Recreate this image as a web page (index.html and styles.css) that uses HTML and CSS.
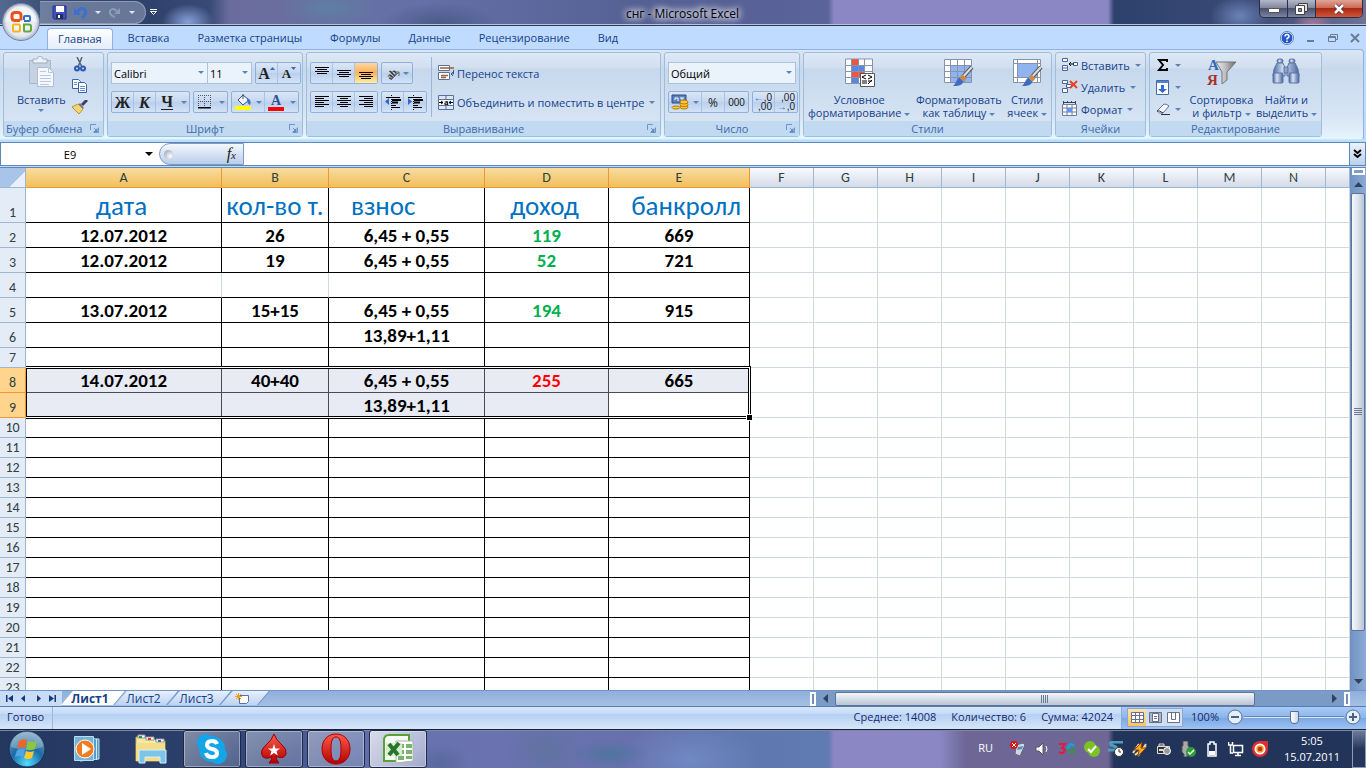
FILE: index.html
```html
<!DOCTYPE html>
<html lang="ru">
<head>
    <meta charset="UTF-8">
    <meta name="viewport" content="width=device-width, initial-scale=1.0">
    <title>снг - Microsoft Excel</title>
    <link rel="stylesheet" href="styles.css">
</head>
<body>
    <svg class="defs" aria-hidden="true">
        <defs>
            <linearGradient id="metal" x1="0" x2="1"><stop offset="0" stop-color="#eee"/><stop offset=".5" stop-color="#bbb"/><stop offset="1" stop-color="#666"/></linearGradient>
            <linearGradient id="steel" x1="0" x2="1"><stop offset="0" stop-color="#4a679f"/><stop offset=".4" stop-color="#d5e2f7"/><stop offset="1" stop-color="#48659c"/></linearGradient>
            <linearGradient id="red" x1="0" y1="0" x2="0" y2="1"><stop offset="0" stop-color="#ff5a4a"/><stop offset="1" stop-color="#b40000"/></linearGradient>
            <radialGradient id="orb" cx=".5" cy=".9" r=".9"><stop offset="0" stop-color="#4fe0ff"/><stop offset=".5" stop-color="#1d6aa5"/><stop offset="1" stop-color="#7fa3bd"/></radialGradient>
            <radialGradient id="pearl" cx=".5" cy=".5" r=".55"><stop offset="0" stop-color="#fff"/><stop offset=".7" stop-color="#e2e8f2"/><stop offset="1" stop-color="#8f9db8"/></radialGradient>
        </defs>
        <symbol id="launcher" viewBox="0 0 9 9"><path d="M.5 6V.5H6M3.500 8.500h5v-5M4 4l3 3" fill="none" stroke="#6f95c6"/><path d="M7.500 4v4h-4z" fill="#5f87bd"/></symbol>
        <symbol id="brush" viewBox="0 0 20 20"><path d="M18 1 9 11" stroke="#555" stroke-width="4"/><path d="M18 1 9 11" stroke="#ddd" stroke-width="2"/><path d="m9 8 4 4-3 3-4-4z" fill="#c98a4a"/><path d="m6 11 4 4c-2 4-6 4-10 4 3-2 3-6 6-8z" fill="#3f6cc0"/></symbol>
    </svg>

    <header class="titlebar">
        <button class="office" aria-label="Office">
            <svg width="40" height="40" viewBox="0 0 40 40"><circle cx="20" cy="20" r="18.500" fill="url(#pearl)" stroke="#77839f"/><path d="M4 20a16 16 0 0 1 32 0q-16-4-32 0z" fill="#fff" opacity=".5"/><g fill="none"><path d="M19 18.500h-5q-3 0-3-3v-2q0-3 3-3h3q3 0 3 3v5" stroke="#e8541c" stroke-width="3"/><path d="M23 18v-3q0-1 1-1h4q1 0 1 1v3q0 1-1 1h-5" stroke="#2f74c8" stroke-width="2"/><path d="M19 22.500h-6q-1 0-1 1v5q0 1 1 1h5q1 0 1-1v-6" stroke="#f5b61c" stroke-width="2"/><path d="M23 28.500v-6h5q2 0 2 2v3q0 2-2 2h-3q-2 0-2-1z" stroke="#62a737" stroke-width="2"/></g></svg>
        </button>
        <div class="quick">
            <button aria-label="Сохранить"><svg width="15" height="15" viewBox="0 0 15 15"><path d="M1 1h13v13H2l-1-1z" fill="#4050c0" stroke="#26318c"/><path d="M4 1h8v6H4z" fill="#fff"/><path d="M4 9h7v5H4z" fill="#252c60"/><path d="M6 10h2v3H6z" fill="#fff"/></svg></button>
            <button aria-label="Отменить"><svg width="14" height="14" viewBox="0 0 14 14"><path d="M3 6Q8 0 11 4q2 4-3 8" fill="none" stroke="#3c6fd0" stroke-width="3"/><path d="M0 2v7h7z" fill="#3c6fd0"/></svg></button>
            <i class="arrow pale"></i>
            <button aria-label="Вернуть"><svg width="14" height="14" viewBox="0 0 14 14"><path d="M9 5Q4 1 2 5q-1 4 5 6" fill="none" stroke="#8b9cba" stroke-width="2"/><path d="M12 2v6H6z" fill="#8b9cba"/></svg></button>
            <i class="arrow pale"></i>
        </div>
        <button class="customize" aria-label="Настройка панели"><svg width="7" height="7"><path d="M0 .5h7" stroke="#fff"/><path d="M.5 2.500h6l-3 3z" fill="none" stroke="#fff"/></svg></button>
        <h1>снг - Microsoft Excel</h1>
        <div class="window-buttons">
            <button aria-label="Свернуть"><svg width="12" height="10"><path d="M.5 4.500h11v4H.5z" fill="#fff" stroke="#555"/></svg></button>
            <button aria-label="Развернуть"><svg width="13" height="12"><path d="M3.500.5h9v8h-9z" fill="#ddd" stroke="#444"/><path d="M.5 2.500h9v9h-9z" fill="#fff" stroke="#444"/><path d="M3.500 5.500h3v3h-3z" fill="#8a8fa2" stroke="#444"/></svg></button>
            <button class="close" aria-label="Закрыть"><svg width="14" height="12"><path d="m3 2 8 8M11 2l-8 8" stroke="#5b2b2b" stroke-width="4"/><path d="m3 2 8 8M11 2l-8 8" stroke="#fff" stroke-width="2.500"/></svg></button>
        </div>
    </header>

    <nav class="tabs">
        <a href="#" class="active">Главная</a>
        <a href="#">Вставка</a>
        <a href="#">Разметка страницы</a>
        <a href="#">Формулы</a>
        <a href="#">Данные</a>
        <a href="#">Рецензирование</a>
        <a href="#">Вид</a>
        <div class="book-buttons">
            <button aria-label="Справка"><svg width="14" height="14"><circle cx="7" cy="7" r="6" fill="#2458c8" stroke="#fff"/><circle cx="7" cy="7" r="6.500" fill="none" stroke="#5b82c4"/><path d="M5 5.500Q5 3.500 7 3.500t2 2Q9 6.500 7 7.500v1M7 9.500v1.500" fill="none" stroke="#fff" stroke-width="1.500"/></svg></button>
            <button aria-label="Свернуть книгу"><svg width="10" height="10"><path d="M1 7h7v2H1z" fill="#6b7b92"/></svg></button>
            <button aria-label="Восстановить книгу"><svg width="10" height="10"><path d="M2.500 4V1.500h7v5H8" fill="none" stroke="#6b7b92"/><path d="M.5 3.500h7v5h-7zM0 4.500h8" fill="none" stroke="#6b7b92"/></svg></button>
            <button aria-label="Закрыть книгу"><svg width="10" height="10"><path d="m1 1 8 8M9 1 1 9" stroke="#6b7b92" stroke-width="2"/></svg></button>
        </div>
    </nav>

    <section class="ribbon">
        <div class="group clipboard">
            <div class="body">
                <button class="big">
                    <svg width="28" height="32" viewBox="0 0 28 32"><path d="M2.500 4.500h21v23h-21z" fill="#c6d1e1" stroke="#a9b7cc"/><path d="M6 3h4q1-3 3-3t3 3h4v4H6z" fill="#edf1f7" stroke="#9fadc2"/><path d="M10.500 11.500h11l5 5v14h-16z" fill="#f4f7fc" stroke="#afbdd4"/><path d="M21.500 11.500v5h5M13 15.500h6M13 19.500h11M13 22.500h11M13 25.500h11M13 28.500h9" fill="none" stroke="#b9c8de"/></svg>
                    <span>Вставить</span>
                    <i class="arrow"></i>
                </button>
                <div class="stack">
                    <button aria-label="Вырезать"><svg width="14" height="15" viewBox="0 0 14 15"><path d="M4 0 9 10M9 0 5 10" stroke="#52627f" stroke-width="1.500"/><g fill="none" stroke="#2d59b4" stroke-width="2"><circle cx="4" cy="11.500" r="2"/><circle cx="10" cy="11.500" r="2"/></g></svg></button>
                    <button aria-label="Копировать"><svg width="16" height="14" viewBox="0 0 16 14"><g fill="#fff" stroke="#3862ac"><path d="M.5.5h6l2 2v7h-8z"/><path d="M6.500 3.500h6l2 2v8h-8z"/></g><path d="M2 3.500h3M2 5.500h3M8 7.500h5M8 9.500h5M8 11.500h5" stroke="#5f8fd6"/></svg></button>
                    <button aria-label="Формат по образцу"><svg width="16" height="14" viewBox="0 0 16 14"><path d="m15 0-5 5" stroke="#3d3d6c" stroke-width="3"/><path d="m8 3 4 5-2 1-4-4z" fill="#6b7390"/><path d="m6 4 5 5-4 5L0 7z" fill="#f3d775" stroke="#b99232"/></svg></button>
                </div>
            </div>
            <footer>Буфер обмена<svg width="9" height="9"><use href="#launcher"/></svg></footer>
        </div>

        <div class="group font">
            <div class="body rows">
                <div class="line">
                    <label class="combo family"><select aria-label="Шрифт"><option>Calibri</option></select></label><label class="combo size"><select aria-label="Размер"><option>11</option></select></label>
                    <div class="set letters">
                        <button aria-label="Увеличить размер"><b class="serif">A</b><svg width="5" height="12"><path d="M0 3h5L2.500 0z" fill="#3b69b5"/></svg></button>
                        <button aria-label="Уменьшить размер"><b class="serif small">A</b><svg width="5" height="12"><path d="M0 0h5L2.500 3z" fill="#3b69b5"/></svg></button>
                    </div>
                </div>
                <div class="line">
                    <div class="set">
                        <button class="serif"><b>Ж</b></button>
                        <button class="serif"><b><em>К</em></b></button>
                        <button class="serif under"><b>Ч</b></button>
                        <button class="drop" aria-label="Подчёркивание"><i class="arrow"></i></button>
                    </div>
                    <div class="set">
                        <button aria-label="Границы"><svg width="14" height="14"><path d="M.5 0v12M12.500 0v12M6.500 0v12M0 .5h13M0 6.500h13" fill="none" stroke="#556" stroke-dasharray="1 1"/><path d="M0 12h13v1.500H0z"/></svg></button>
                        <button class="drop" aria-label="Вид границ"><i class="arrow"></i></button>
                    </div>
                    <div class="set">
                        <button aria-label="Заливка"><svg width="16" height="16"><path d="m3 6 5-5 6 5-6 5z" fill="#eef4ff" stroke="#3d526f"/><path d="M8 5V0" stroke="#3d526f"/><path d="M12 4q5 2 3 7-3-1-3-7z" fill="#3d6fc4"/><path d="M0 12h16v4H0z" fill="#ff0"/></svg></button>
                        <button class="drop" aria-label="Цвет заливки"><i class="arrow"></i></button>
                        <button class="color" aria-label="Цвет текста"><b>A</b></button>
                        <button class="drop" aria-label="Выбор цвета"><i class="arrow"></i></button>
                    </div>
                </div>
            </div>
            <footer>Шрифт<svg width="9" height="9"><use href="#launcher"/></svg></footer>
        </div>

        <div class="group align">
            <div class="body">
                <div class="rows">
                    <div class="line">
                        <div class="set">
                            <button aria-label="По верхнему краю"><svg width="14" height="14"><path d="M0 1.500h14M2 3.500h10M0 5.500h14M2 7.500h10" stroke="#000"/></svg></button>
                            <button aria-label="По середине"><svg width="14" height="14"><path d="M0 4.500h14M2 6.500h10M0 8.500h14M2 10.500h10" stroke="#000"/></svg></button>
                            <button class="on" aria-label="По нижнему краю"><svg width="14" height="14"><path d="M0 6.500h14M2 8.500h10M0 10.500h14M2 12.500h10" stroke="#000"/></svg></button>
                        </div>
                        <div class="set">
                            <button class="rotate" aria-label="Ориентация"><svg width="16" height="15"><text x="1" y="12" transform="rotate(-45 6 8)">ab</text><path d="m6 14 8-8M10 6h4v4" fill="none" stroke="#666"/></svg><i class="arrow"></i></button>
                        </div>
                    </div>
                    <div class="line">
                        <div class="set">
                            <button aria-label="По левому краю"><svg width="14" height="14"><path d="M0 1.500h14M0 3.500h9M0 5.500h14M0 7.500h9M0 9.500h14M0 11.500h9" stroke="#000"/></svg></button>
                            <button aria-label="По центру"><svg width="14" height="14"><path d="M0 1.500h14M3 3.500h8M0 5.500h14M3 7.500h8M0 9.500h14M3 11.500h8" stroke="#000"/></svg></button>
                            <button aria-label="По правому краю"><svg width="14" height="14"><path d="M0 1.500h14M5 3.500h9M0 5.500h14M5 7.500h9M0 9.500h14M5 11.500h9" stroke="#000"/></svg></button>
                        </div>
                        <div class="set">
                            <button aria-label="Уменьшить отступ"><svg width="16" height="15"><path d="M1 2.500h14M7 12.500h8M7 10.500h4" stroke="#000"/><path d="M7 5h9M7 7.500h6" stroke="#000" stroke-width="2"/><path d="M6.500 0v15" stroke="#000" stroke-dasharray="1 1"/><path d="M0 6.500 4 3v7z" fill="#2f69d0"/></svg></button>
                            <button aria-label="Увеличить отступ"><svg width="16" height="15"><path d="M1 2.500h14M7 12.500h8M7 10.500h4" stroke="#000"/><path d="M7 5h9M7 7.500h6" stroke="#000" stroke-width="2"/><path d="M6.500 0v15" stroke="#000" stroke-dasharray="1 1"/><path d="M5 6.500 1 3v7z" fill="#2f69d0"/></svg></button>
                        </div>
                    </div>
                </div>
                <div class="rows wrap">
                    <button class="text"><svg width="16" height="16"><path d="M.5.500h11v5H.5zM.5 7.500h11v7H.5z" fill="#fff" stroke="#56719d"/><path d="M2 3h14M3 10.500h7M3 12.500h5" stroke="#a55e2d" stroke-width="1.500"/><path d="M15.500 5v4H13m2-2-2 2 2 2" fill="none" stroke="#3d5a8e"/></svg>Перенос текста</button>
                    <button class="text"><svg width="16" height="15"><path d="M.5.5h15v14H.5zM8 0v4M8 11v4" fill="#dce8f8" stroke="#56719d"/><path d="M.5 4.500h15v6H.5z" fill="#fff" stroke="#56719d"/><path d="M1 7.500h4M11 7.500h4M3 6l2 1.500L3 9M13 6l-2 1.500L13 9" fill="none" stroke="#000"/><text x="6" y="10">a</text></svg>Объединить и поместить в центре<i class="arrow"></i></button>
                </div>
            </div>
            <footer>Выравнивание<svg width="9" height="9"><use href="#launcher"/></svg></footer>
        </div>

        <div class="group number">
            <div class="body rows">
                <div class="line"><label class="combo format"><select aria-label="Числовой формат"><option>Общий</option></select></label></div>
                <div class="line">
                    <div class="set">
                        <button aria-label="Денежный формат"><svg width="18" height="16"><path d="M1 1h14v8H1z" fill="#5c83bd" stroke="#274b8b"/><path d="M4 6V4h3v3M9 4h4M11 4v3" fill="none" stroke="#fff"/><g fill="#ffc832" stroke="#b5790c"><ellipse cx="13" cy="13" rx="4" ry="2"/><ellipse cx="13" cy="10.500" rx="4" ry="2"/><ellipse cx="13" cy="8" rx="4" ry="2"/><ellipse cx="5" cy="13.500" rx="4" ry="1.500"/></g></svg></button>
                        <button class="drop" aria-label="Валюта"><i class="arrow"></i></button>
                        <button class="dark">%</button>
                        <button class="dark zeros">000</button>
                    </div>
                    <div class="set">
                        <button class="digits"><span><i>←</i>,0</span><span>,00</span></button>
                        <button class="digits"><span>,00</span><span><i>→</i>,0</span></button>
                    </div>
                </div>
            </div>
            <footer>Число<svg width="9" height="9"><use href="#launcher"/></svg></footer>
        </div>

        <div class="group styles">
            <div class="body">
                <button class="big">
                    <svg width="31" height="32" viewBox="0 0 31 32"><path d="M1 3h27v25H1z" fill="#fff"/><path d="M8 3h6v6H8zM8 15h12v6H8z" fill="#f0553c"/><path d="M8 9h12v6H8zM8 21h6v7H8z" fill="#5b86e0"/><path d="M1.500 3v24.500h27V3zM1 9.500h27M1 15.500h27M1 21.500h27M7.500 3v25M14.500 3v25M20.500 3v25" fill="none" stroke="#8792ad"/><path d="M16.500 17.500h14v13h-14z" fill="#fff" stroke="#555"/><path d="m22 19-4 2 4 2M18 25h5M18 27h5M24 19l4 2-4 2M24 25h4M24 28l4-4" fill="none" stroke="#000"/></svg>
                    <span>Условное<br>форматирование <i class="arrow"></i></span>
                </button>
                <button class="big">
                    <svg width="31" height="32" viewBox="0 0 31 32"><path d="M1 3h27v24H1z" fill="#fff"/><path d="M8 9h20v18H8z" fill="#8fb4f0"/><path d="M1.500 3.500v23h27v-23zM1 9.500h27M1 15.500h27M1 21.500h27M7.500 3v24M14.500 3v24M21.500 3v24" fill="none" stroke="#8792ad"/><svg x="10" y="10" width="21" height="21"><use href="#brush"/></svg></svg>
                    <span>Форматировать<br>как таблицу <i class="arrow"></i></span>
                </button>
                <button class="big">
                    <svg width="31" height="32" viewBox="0 0 31 32"><path d="M1 3h28v24H1z" fill="#fff"/><path d="M6 8h19v13H6z" fill="#8fb4f0"/><path d="M1.500 3.500v23h27v-23zM1 7.500h27M1 21.500h27M5.500 3v24M25.500 3v24" fill="none" stroke="#8792ad"/><svg x="10" y="10" width="21" height="21"><use href="#brush"/></svg></svg>
                    <span>Стили<br>ячеек <i class="arrow"></i></span>
                </button>
            </div>
            <footer>Стили</footer>
        </div>

        <div class="group cells">
            <div class="body list">
                <button class="text"><svg width="16" height="14"><path d="M.5.500h5v3h-5zM.5 7.500h5v5h-5zM1 10h4M11.500 4.500h4v3h-4z" fill="#fff" stroke="#4c6592"/><path d="M7 6h5M9 4 7 6l2 2" fill="none" stroke="#000"/></svg>Вставить<i class="arrow"></i></button>
                <button class="text"><svg width="16" height="14"><path d="M.5.500h5v3h-5zM.5 8.500h5v4h-5zM4.500 4.500h5v3h-5z" fill="#fff" stroke="#4c6592"/><path d="m8 1 7 7M15 1 8 8" stroke="#ef4023" stroke-width="2"/></svg>Удалить<i class="arrow"></i></button>
                <button class="text"><svg width="16" height="16"><path d="M.5 3.500h14v11H.5zM1 7h14M1 11h14M5 4v11M10 4v11" fill="#fff" stroke="#6c7d9d"/><path d="M5 7h5v4H5z" fill="#6296ee"/><path d="M1 1.500h13M1.500 0v3M5.500 0v2M9.500 0v2M13.500 0v3" stroke="#345"/></svg>Формат<i class="arrow"></i></button>
            </div>
            <footer>Ячейки</footer>
        </div>

        <div class="group editing">
            <div class="body">
                <div class="list">
                    <button class="text" aria-label="Сумма"><svg width="14" height="14"><path d="M11 4V2H3l4 5-4 5h8v-2" fill="none" stroke="#000" stroke-width="2"/></svg><i class="arrow"></i></button>
                    <button class="text" aria-label="Заполнить"><svg width="14" height="15"><path d="M.5.500h12v14H.5z" fill="#fff" stroke="#4669a4"/><path d="M1 1h11v2H1z" fill="#4d82d8"/><path d="M5 5h3v4h3l-4.500 4L2 9h3z" fill="#2f6ad6"/></svg><i class="arrow"></i></button>
                    <button class="text" aria-label="Очистить"><svg width="14" height="14"><path d="m1 9 7-7q3 0 5 2l-6 7q-4 1-6-2z" fill="#f3f6fd" stroke="#627499"/><path d="M1 9q2-1 6 2M5 12.500h9" fill="none" stroke="#333"/></svg><i class="arrow"></i></button>
                </div>
                <button class="big">
                    <svg width="31" height="32" viewBox="0 0 31 32"><text class="az" x="2" y="14" fill="#3567b8">А</text><text class="az" x="1" y="29" fill="#a5332b">Я</text><path d="M10 6h20l-9 10v8l-5 4V16z" fill="url(#metal)" stroke="#777"/></svg>
                    <span>Сортировка<br>и фильтр <i class="arrow"></i></span>
                </button>
                <button class="big">
                    <svg width="31" height="32" viewBox="0 0 31 32"><g fill="url(#steel)" stroke="#5a74a6"><rect x="6" y="3" width="6" height="4" rx="2"/><rect x="18" y="3" width="6" height="4" rx="2"/><path d="M6 7h6l2 5v8H2q0-7 4-13zM18 7h6q4 6 4 13H16v-8zM13 11h4v6h-4z"/><rect x="2" y="17" width="10" height="10" rx="1"/><rect x="18" y="17" width="10" height="10" rx="1"/></g></svg>
                    <span>Найти и<br>выделить <i class="arrow"></i></span>
                </button>
            </div>
            <footer>Редактирование</footer>
        </div>
    </section>

    <div class="formula">
        <input class="name-box" aria-label="Имя ячейки" value="E9"><i class="arrow black"></i>
        <div class="fx"><span class="knob"></span><button class="serif" aria-label="Вставить функцию"><em>f<small>x</small></em></button></div>
        <input class="value" aria-label="Строка формул">
        <button class="expand" aria-label="Развернуть строку формул"><svg width="9" height="10"><path d="m1 1 3.500 3L8 1M1 5l3.500 3L8 5" fill="none" stroke="#000" stroke-width="2"/></svg></button>
    </div>

    <main class="workspace">
        <div class="sheet">
            <table>
                <colgroup>
                    <col class="c-num"><col class="c-a"><col class="c-b"><col class="c-c"><col class="c-d"><col class="c-e">
                    <col class="c-std" span="9"><col>
                </colgroup>
                <thead><tr id="letters"></tr></thead>
                <tbody id="cells"></tbody>
            </table>
            <div class="selection"></div>
            <div class="handle"></div>
        </div>
        <div class="vscroll">
            <div class="split"></div>
            <button aria-label="Вверх"><svg width="9" height="5"><path d="M0 5h9L4.500 0z" fill="#33415e"/></svg></button>
            <div class="thumb"><svg width="8" height="8"><path d="M0 .5h8M0 2.500h8M0 4.500h8M0 6.500h8" stroke="#6d7a8f"/></svg></div>
            <button class="last" aria-label="Вниз"><svg width="9" height="5"><path d="M0 0h9L4.500 5z" fill="#33415e"/></svg></button>
        </div>
    </main>

    <div class="sheet-bar">
        <div class="jump">
            <button aria-label="Первый лист"><svg width="7" height="7"><path d="M0 0h1.500v7H0zM7 0v7L2 3.500z" fill="#15387c"/></svg></button>
            <button aria-label="Предыдущий лист"><svg width="7" height="7"><path d="M5 0v7L1 3.500z" fill="#15387c"/></svg></button>
            <button aria-label="Следующий лист"><svg width="7" height="7"><path d="M2 0v7l4-3.500z" fill="#15387c"/></svg></button>
            <button aria-label="Последний лист"><svg width="7" height="7"><path d="M5.500 0H7v7H5.500zM0 0v7l5-3.500z" fill="#15387c"/></svg></button>
        </div>
        <button class="sheet-tab current">Лист1</button>
        <button class="sheet-tab">Лист2</button>
        <button class="sheet-tab">Лист3</button>
        <button class="sheet-tab new" aria-label="Вставить лист"><svg width="15" height="12"><path d="M4.500 2.500h9v6l-2 2h-7z" fill="#fff" stroke="#5872a5"/><path d="M3.500 0v7M0 3.500h7M1 1l5 5M6 1 1 6" stroke="#f0a020"/></svg></button>
        <div class="hscroll">
            <div class="split"></div>
            <button aria-label="Влево"><svg width="5" height="9"><path d="M5 0v9L0 4.500z" fill="#33415e"/></svg></button>
            <div class="thumb"><svg width="8" height="8"><path d="M.5 0v8M2.500 0v8M4.500 0v8M6.500 0v8" stroke="#6d7a8f"/></svg></div>
            <button class="last" aria-label="Вправо"><svg width="5" height="9"><path d="M0 0v9l5-4.500z" fill="#33415e"/></svg></button>
            <div class="split"></div>
        </div>
    </div>

    <div class="status">
        <span class="ready">Готово</span>
        <div class="totals"><span>Среднее: 14008</span><span>Количество: 6</span><span>Сумма: 42024</span></div>
        <div class="zoom">
            <div class="views">
                <button class="on" aria-label="Обычный"><svg width="13" height="11"><path d="M.5.500h12v10H.5zM0 3.500h13M0 7.500h13M4.500 0v11M8.500 0v11" fill="#fff" stroke="#66708a"/></svg></button>
                <button aria-label="Разметка страницы"><svg width="13" height="11"><path d="M.5.500h12v10H.5z" fill="#a9b6cb" stroke="#66708a"/><path d="M3.500 1.500h6v8h-6zM5 4.500h3M5 6.500h3" fill="#fff" stroke="#66708a"/></svg></button>
                <button aria-label="Страничный режим"><svg width="13" height="11"><path d="M.5.500h12v10H.5z" fill="#fff" stroke="#66708a"/><path d="M4.500 0v7.500h4V0" fill="none" stroke="#66708a"/></svg></button>
            </div>
            <label for="scale">100%</label>
            <button class="round" aria-label="Уменьшить"><svg width="16" height="16"><circle cx="8" cy="8" r="7" fill="#e4edfa" stroke="#56708f"/><path d="M4 7h8v2H4z" fill="#4a617f"/></svg></button>
            <input id="scale" type="range" min="0" max="200" value="100">
            <button class="round" aria-label="Увеличить"><svg width="16" height="16"><circle cx="8" cy="8" r="7" fill="#e4edfa" stroke="#56708f"/><path d="M4 7h8v2H4zM7 4h2v8H7z" fill="#4a617f"/></svg></button>
        </div>
    </div>

    <footer class="taskbar">
        <button class="start" aria-label="Пуск"><svg width="38" height="38" viewBox="0 0 38 38"><circle cx="19" cy="19" r="18" fill="url(#orb)" stroke="#15304e"/><path d="M3 17a16 15 0 0 1 32 0q-16 6-32 0z" fill="#fff" opacity=".25"/><path d="M11 11q4-3 8-1l-2 8q-4-2-8 0z" fill="#f0642b"/><path d="M20 11q4 2 9 0l-2 8q-5 2-9 0z" fill="#8cc63f"/><path d="M9 20q4-2 8 0l-2 7q-4-2-8 0z" fill="#4fa5e8"/><path d="M18 21q4 2 8 0l-2 7q-4 2-8 0z" fill="#fdc82f"/></svg></button>
        <button class="pin" aria-label="Проигрыватель"><svg width="26" height="26"><path d="M6 2l19 1v20l-19 2z" fill="#5b9bc4" stroke="#b5dff2"/><path d="M22.500 3v21" stroke="#cdeaf8"/><path d="M.5.500h19v24H.5z" fill="#79b4d8" stroke="#b5dff2"/><circle cx="11" cy="13" r="9" fill="#f47c20" stroke="#fff"/><path d="m8 7 9 6-9 6z" fill="#fff"/></svg></button>
        <button class="pin" aria-label="Проводник"><svg width="34" height="30"><path d="M2 3h9l1 2h8l2 2h9v20H2z" fill="#f6e9a6" stroke="#c7a84f"/><path d="M4 1h7v3H4zM12 3h8v3h-8zM22 5h8v3h-8z" fill="#fff" stroke="#999"/><path d="M5 2h3v2H5z" fill="#2b9b3c"/><path d="M14 4h3v2h-3z" fill="#d33"/><path d="M24 6h3v2h-3z" fill="#2672c8"/><path d="M2 9h29v18H2z" fill="#f3dd88"/><path d="M5 29V16h27v13h-6v-6H11v6z" fill="#7cc4e8" stroke="#d3f1fc"/></svg></button>
        <button class="app" aria-label="Skype"><svg width="32" height="32"><g fill="#12a5e8"><circle cx="16" cy="16" r="13"/><circle cx="10" cy="10" r="9"/><circle cx="22" cy="22" r="9"/></g><path d="M21 11q-1-3-5-3-5 0-5 4 0 3 5 4t5 4q0 4-5 4-5 0-6-4" fill="none" stroke="#fff" stroke-width="4"/></svg></button>
        <button class="app" aria-label="PokerStars"><svg width="28" height="32"><path d="M14 1q2 6 8 11 5 4 4 9-2 5-8 3l-2-1q0 4 3 7H9q3-3 3-7-4 4-9 1-4-6 3-12 6-5 8-11z" fill="url(#red)" stroke="#900"/><path d="m14 11 1.500 4.500H20l-3.500 2.700 1.300 4.300-3.800-2.600-3.800 2.600 1.300-4.300L8 15.500h4.500z" fill="#fff"/></svg></button>
        <button class="app" aria-label="Opera"><svg width="30" height="32"><path d="M15 1c8 0 14 6 14 15s-6 15-14 15S1 25 1 16 7 1 15 1zm0 3c-4 0-5 5-5 12s1 12 5 12 5-5 5-12-1-12-5-12z" fill="url(#red)" fill-rule="evenodd" stroke="#a00"/></svg></button>
        <button class="app front" aria-label="Excel"><svg width="32" height="30"><path d="M2 6q0-5 5-5h20v26H2z" fill="#f5f9f3" stroke="#55a332" stroke-width="2"/><path d="M14 7h17v20l-17 2z" fill="#fff" stroke="#a5b5a5"/><path d="M16 10h6v4h-6zM24 10h6v4h-6zM16 16h6v4h-6zM24 16h6v4h-6zM16 22h6v4h-6zM24 22h6v3h-6z" fill="#79b56c"/><path d="M4 9h16v13H4z" fill="#d9ecd0"/><path d="m7 10 9 11M17 9 7 21" stroke="#26772d" stroke-width="4"/></svg></button>
        <div class="tray">
            <span class="lang">RU</span>
            <svg width="16" height="16"><path d="m6 4 7-2 2 2-5 11-5-2z" fill="#ccd8e5" stroke="#667"/><path d="m8 6 5-1-1 3-5 1z" fill="#568ac4"/><circle cx="4" cy="4" r="4" fill="#d81818"/><path d="m2 2 4 4M6 2 2 6" stroke="#fff"/></svg>
            <svg width="16" height="16"><path d="M2 6h3l4-4v12l-4-4H2z" fill="#fff" stroke="#556"/><path d="M12 5q2 3 0 6" fill="none" stroke="#fff"/></svg>
            <svg width="18" height="16"><path d="M1 3h6L4 7q4 1 2 4-2 2-5 0" fill="none" stroke="#e8173d" stroke-width="2"/><path d="M16 5q-5-4-6 3" fill="none" stroke="#1c9fd8" stroke-width="3"/><path d="M10 8q1 5 6 3V8h-3" fill="none" stroke="#32964a" stroke-width="2"/></svg>
            <svg width="16" height="16"><circle cx="6" cy="6" r="6" fill="#7dc225"/><circle cx="10" cy="10" r="6" fill="#7dc225"/><path d="m4 8 3 3 5-6" fill="none" stroke="#fff" stroke-width="2"/></svg>
            <svg width="16" height="16"><path d="M15 1H6Q1 1 3 4l5 2q3 3-1 3H0" fill="none" stroke="#4f9bbb" stroke-width="3"/><circle cx="11" cy="11" r="4.500" fill="#fff" stroke="#333"/><path d="M11 8v3h2" fill="none" stroke="#333"/></svg>
            <svg width="16" height="16"><path d="m1 12 6-9M6 15l8-12M3 14 14 5" stroke="#e9d8aa" stroke-width="2"/><path d="M10 1 2 9h5l-1 6 8-8H9z" fill="#ffa51e" stroke="#8f4a00"/></svg>
            <svg width="16" height="16"><path d="M1.500 5.500h12v7h-12zM3 3h5v2H3z" fill="#333" stroke="#ddd"/><circle cx="11" cy="10" r="3.500" fill="#999" stroke="#fff"/><path d="M3 8h4v2H3z" fill="#ddd"/></svg>
            <svg width="16" height="16"><path d="M3 0h5v5h1v6l-2 2v3H4v-3l-2-2V5h1z" fill="#aaa" stroke="#555"/><circle cx="11" cy="11" r="5" fill="#2b9d36"/><path d="m8 11 2 2 4-4" fill="none" stroke="#fff" stroke-width="1.500"/></svg>
            <svg width="16" height="16"><path d="M6 1h4v2h2v12H4V3h2z" fill="none" stroke="#fff" stroke-width="1.500"/><path d="M5 10h6v4H5z" fill="#fff"/></svg>
            <svg width="16" height="16"><path d="M5.500 4.500h9v7h-9zM7 14.500h6M10 12v2M.5 1v3h4V1M2.500 4v8H5" fill="none" stroke="#fff" stroke-width="1.500"/></svg>
            <svg width="16" height="16"><path d="M8 0h8v8a8 8 0 1 1-8-8z" fill="#df2d32"/><circle cx="8" cy="8" r="5.500" fill="#fff"/><circle cx="8" cy="8" r="3" fill="#b93a18" stroke="#f6972a" stroke-width="1.500"/></svg>
        </div>
        <div class="clock"><span>5:05</span><span>15.07.2011</span></div>
        <button class="desktop" aria-label="Показать рабочий стол"></button>
    </footer>

    <script>
        const letters = 'ABCDEFGHIJKLMN'.split('');
        const rows = {
            1: ['дата', 'кол-во т.', 'взнос', 'доход', 'банкролл'],
            2: ['12.07.2012', '26', '6,45 + 0,55', '119', '669'],
            3: ['12.07.2012', '19', '6,45 + 0,55', '52', '721'],
            5: ['13.07.2012', '15+15', '6,45 + 0,55', '194', '915'],
            6: ['', '', '13,89+1,11', '', ''],
            8: ['14.07.2012', '40+40', '6,45 + 0,55', '255', '665'],
            9: ['', '', '13,89+1,11', '', '']
        };
        const tall = [2, 3, 4, 5, 6, 8, 9];

        let head = '<th class="corner"></th>';
        letters.concat('').forEach((letter, i) => {
            head += `<th class="${i < 5 ? 'picked' : ''}">${letter}</th>`;
        });
        document.getElementById('letters').innerHTML = head;

        let body = '';
        for (let n = 1; n <= 23; n++) {
            const names = [];
            if (n === 1) names.push('heading');
            if (n === 4) names.push('blank');
            if (tall.includes(n)) names.push('tall');
            if (n === 8 || n === 9) names.push('selected');
            body += `<tr class="${names.join(' ')}"><th>${n}</th>`;
            for (let c = 0; c < 15; c++) {
                const text = rows[n] && rows[n][c] ? rows[n][c] : '';
                let cls = c < 5 ? 'ruled' : '';
                if (c === 3 && n > 1) cls += n === 8 ? ' loss' : ' gain';
                if (c === 4 && n === 9) cls += ' cursor';
                body += `<td class="${cls}">${text}</td>`;
            }
            body += '</tr>';
        }
        document.getElementById('cells').innerHTML = body;
    </script>
</body>
</html>
```
FILE: styles.css
```css
* {
    box-sizing: border-box;
}
body {
    margin: 0;
    height: 100vh;
    display: flex;
    flex-direction: column;
    overflow: hidden;
    font-family: "Open Sans", "Noto Sans", sans-serif;
    font-size: 11px;
    line-height: 13px;
    color: #15428b;
    background: #bfdbff;
}
button {
    display: flex;
    align-items: center;
    justify-content: center;
    margin: 0;
    padding: 0;
    border: 0;
    background: none;
    font: inherit;
    color: inherit;
}
svg {
    flex: none;
    display: block;
}
.defs {
    position: absolute;
    width: 0;
    height: 0;
}
.serif {
    font-family: "Liberation Serif", serif;
    font-size: 16px;
    color: #222;
}
.arrow {
    display: inline-block;
    flex: none;
    border: 3px solid transparent;
    border-top-color: #5a83bb;
    border-bottom: 0;
    vertical-align: middle;
}
.arrow.pale {
    border-top-color: #dfe7f5;
}
.arrow.black {
    border-width: 4px 4px 0;
    border-top-color: #000;
}

/* title bar */
.titlebar {
    position: relative;
    flex: none;
    display: flex;
    height: 26px;
    border-bottom: 1px solid #2b3a55;
    box-shadow: inset 0 -1px #b9c3dc;
    background:
        radial-gradient(ellipse 26px 18px at 188px 22px, #86a1d6, transparent),
        radial-gradient(ellipse 60px 24px at 440px 26px, #465a86, transparent),
        radial-gradient(ellipse 50px 20px at 330px 8px, #5f7fa3, transparent),
        radial-gradient(ellipse 30px 20px at 1240px 16px, #6b83b8, transparent),
        radial-gradient(ellipse 20px 16px at 1313px 26px, #b07a9c, transparent),
        linear-gradient(90deg, #53698f 0, #33476f 60px, #2f426b 150px, #3a4a78 210px, #6a6d9c 230px, #6670a8 420px, #556093 640px, #5a639a 828px, #8a87c4 834px, #8a87c4 1108px, #2d416d 1114px, #3b4a76 1250px, #6e7396 1366px);
}
.titlebar h1 {
    flex: 1;
    margin: 0;
    padding-right: 54px;
    font-size: 12px;
    font-weight: normal;
    line-height: 27px;
    text-align: center;
    color: #000;
    text-shadow: 0 0 6px #fff, 0 0 8px #fff, 0 0 10px #fff;
}
.office {
    position: absolute;
    left: 1px;
    top: 2px;
    z-index: 2;
}
.quick {
    display: flex;
    align-items: center;
    gap: 7px;
    height: 23px;
    margin: 1px 0 0 40px;
    padding: 0 10px 0 12px;
    border: 1px solid #8e9bb8;
    border-left: 0;
    border-radius: 0 12px 12px 0;
    background: rgba(160, 172, 198, .5);
}
.customize {
    width: 14px;
}
.window-buttons {
    display: flex;
    align-self: flex-start;
    height: 18px;
    margin-right: 3px;
    border: 1px solid #2a3044;
    border-top: 0;
    border-radius: 0 0 5px 5px;
    overflow: hidden;
    background: linear-gradient(#b3b9c9, #7b8299 50%, #4a5270 50%, #7a83a0);
}
.window-buttons button {
    width: 28px;
    border-right: 1px solid #2a3044;
}
.window-buttons .close {
    width: 46px;
    border-right: 0;
    background: linear-gradient(#e0a595, #cb6350 50%, #a92a14 50%, #d0553a);
}

/* ribbon */
.tabs {
    flex: none;
    display: flex;
    align-items: flex-end;
    height: 23px;
    padding-left: 47px;
    background: #bfdbff;
}
.tabs a {
    height: 21px;
    padding: 0 14px;
    line-height: 20px;
    color: #15428b;
    text-decoration: none;
}
.tabs .active {
    padding: 0 10px;
    margin-right: 1px;
    border: 1px solid #8db2e3;
    border-bottom: 0;
    border-radius: 4px 4px 0 0;
    background: linear-gradient(#fff, #e3edfa);
}
.book-buttons {
    display: flex;
    align-items: center;
    gap: 12px;
    height: 22px;
    margin-left: auto;
    padding-right: 6px;
}
.ribbon {
    flex: none;
    display: flex;
    gap: 3px;
    height: 91px;
    margin-right: 2px;
    padding: 2px 3px;
    border: 1px solid #8db2e3;
    border-left: 0;
    border-bottom-color: #b5f2fb;
    border-radius: 0 4px 4px 0;
    background: linear-gradient(#dbe6f4, #c9d9ed 20%, #d7e5f5 75%, #e7f5fe);
}
.group {
    flex: none;
    display: flex;
    flex-direction: column;
    border: 1px solid #9ebfdb;
    border-radius: 3px;
    background: linear-gradient(#dee8f5, #d1dff0 18%, #c7d8ed 19%, #dae7f5);
}
.group > footer {
    display: flex;
    align-items: center;
    justify-content: center;
    height: 15px;
    padding: 0 4px;
    color: #3e6aaa;
    background: #c1d9f1;
}
.group > footer svg {
    margin-left: auto;
}
.group > footer:has(svg)::before {
    content: "";
    width: 9px;
    margin-right: auto;
}
.clipboard > footer:has(svg)::before {
    display: none;
}
.clipboard > footer {
    padding-left: 2px;
}
.clipboard { width: 101px; }
.font { width: 196px; }
.align { width: 355px; }
.number { width: 136px; }
.styles { width: 249px; }
.cells { width: 91px; }
.editing { width: 173px; }
.body {
    flex: 1;
    display: flex;
}
.rows {
    display: flex;
    flex-direction: column;
    gap: 7px;
    padding: 9px 0 0 3px;
}
.line {
    display: flex;
    gap: 3px;
}
.list, .stack {
    display: flex;
    flex-direction: column;
    padding: 1px 6px;
}
.list .text {
    height: 22px;
}
.stack {
    gap: 7px;
    padding: 4px 0;
    align-items: center;
}
.big {
    flex-direction: column;
    justify-content: flex-start;
    padding: 3px 0 0;
    text-align: center;
}
.big span {
    margin-top: 5px;
}
.big > .arrow {
    margin-top: 3px;
}
.styles .body, .editing .body {
    justify-content: space-between;
    padding-right: 4px;
}
.styles .body {
    padding-left: 4px;
}
.clipboard .body {
    gap: 6px;
    padding-left: 13px;
}
.text {
    justify-content: flex-start;
    gap: 3px;
    height: 22px;
}
.text .arrow {
    margin-left: 2px;
}
.text svg text {
    font: bold 9px "Liberation Serif", serif;
}
.wrap {
    margin: 4px 0 4px 4px;
    padding-top: 5px;
    padding-left: 6px;
    border-left: 1px solid #9ab6dc;
}
.set {
    display: flex;
    height: 22px;
    border: 1px solid #8fb0dc;
    border-radius: 2px;
    background: linear-gradient(#dbe7f6, #c4d6ee 50%, #b9cfec 50%, #d3e3f7);
}
.set button {
    width: 22px;
    border-right: 1px solid #a9c3e6;
}
.set button:last-child {
    border-right: 0;
}
.set .drop {
    width: 11px;
}
.set button:has(+ .drop) {
    border-right: 0;
}
.set .on {
    background: linear-gradient(#fbd9a5, #fdb25a 45%, #fdb95f 55%, #ffef9f);
}
.letters svg {
    align-self: flex-start;
    margin-top: 4px;
}
.serif.small {
    font-size: 13px;
}
.under b {
    border-bottom: 1px solid #222;
    line-height: 14px;
}
.set .color {
    flex-direction: column;
    font: bold 14px/13px "Liberation Serif", serif;
    color: #2f4f96;
}
.color::after {
    content: "";
    width: 16px;
    height: 4px;
    background: #f00;
}
.set .rotate {
    width: 30px;
    gap: 2px;
}
.rotate svg {
    overflow: visible;
}
.rotate text {
    font: bold 10px "Liberation Serif", serif;
    fill: #333;
}
.az {
    font: bold 15px "Liberation Serif", serif;
}
.combo {
    display: flex;
    position: relative;
    height: 22px;
}
.combo::after {
    content: "";
    position: absolute;
    right: 4px;
    top: 9px;
    border: 3px solid transparent;
    border-top-color: #5a83bb;
    border-bottom: 0;
}
.combo select {
    width: 100%;
    padding: 0 2px;
    border: 1px solid #abc1de;
    border-radius: 0;
    appearance: none;
    font: inherit;
    color: #000;
    background: #eaf2fb;
}
.family { width: 97px; }
.size { width: 45px; margin-left: -4px; }
.format { width: 128px; }
.set .dark {
    width: 23px;
    font-size: 12px;
    color: #222;
}
.set .zeros {
    font-family: "Liberation Sans", sans-serif;
    font-size: 10px;
}
.set .digits {
    flex-direction: column;
    align-items: flex-end;
    padding-right: 2px;
    font: 10px/9px "Liberation Sans", sans-serif;
    color: #222;
}
.digits i {
    font-style: normal;
    color: #1f5fc9;
}

/* formula bar */
.formula {
    flex: none;
    display: flex;
    align-items: center;
    height: 24px;
    margin-top: 2px;
    border: 1px solid #5e87b8;
    background: #fff;
}
.formula input {
    min-width: 0;
    border: 0;
    outline: 0;
    font: inherit;
    background: none;
}
.name-box {
    width: 138px;
    padding: 0;
    text-align: center;
}
.formula .arrow {
    margin: 0 6px;
}
.fx {
    display: flex;
    align-items: center;
    justify-content: space-between;
    align-self: stretch;
    width: 85px;
    padding: 0 7px 0 4px;
    border: 1px solid #7d9cc4;
    border-radius: 12px 0 0 12px;
    background: linear-gradient(#f4f8fe, #b9cdea);
}
.knob {
    width: 9px;
    height: 9px;
    border-radius: 50%;
    background: radial-gradient(at 70% 70%, #fff, #8d97ab);
}
.fx small {
    font-size: 11px;
}
.value {
    flex: 1;
}
.expand {
    align-self: stretch;
    width: 16px;
    border-left: 1px solid #5e87b8;
    background: linear-gradient(#eaf2fc, #bcd2ef);
}

/* grid */
.workspace {
    flex: 1;
    display: flex;
    min-height: 0;
    margin-top: 1px;
    border-top: 1px solid #5e87b8;
}
.sheet {
    position: relative;
    flex: 1;
    overflow: hidden;
    background: #fff;
}
.sheet table {
    width: 100%;
    table-layout: fixed;
    border-collapse: separate;
    border-spacing: 0;
    font-family: Carlito, Lato, sans-serif;
}
.c-num { width: 26px; }
.c-a { width: 196px; }
.c-b { width: 107px; }
.c-c { width: 156px; }
.c-d { width: 124px; }
.c-e { width: 141px; }
.c-std { width: 64px; }
.sheet th, .sheet td {
    height: 20px;
    padding: 0;
    border: 0 solid #d0d7e5;
    border-width: 0 1px 1px 0;
    white-space: nowrap;
}
.sheet th {
    font-size: 14px;
    font-weight: normal;
    line-height: 18px;
    vertical-align: bottom;
    border-color: #9eb6ce;
    color: #303f3f;
    background: #e4ecf7;
}
.sheet thead th {
    background: linear-gradient(#f8fafd, #d3dbe9);
}
.sheet thead .picked {
    border-color: #f29536;
    background: linear-gradient(#f9dca0, #f1c05b);
}
.sheet thead .corner {
    background: linear-gradient(135deg, #a9c4e9 65%, #e9f0fa 65%);
}
.sheet td {
    font-size: 19px;
    font-weight: bold;
    line-height: 22px;
    text-align: center;
    vertical-align: bottom;
    color: #000;
}
.sheet tbody tr:not(.heading, .tall) td {
    line-height: 18px;
}
.sheet .tall > * {
    height: 25px;
}
.sheet .heading > * {
    height: 35px;
}
.sheet .heading td {
    padding: 0 4px 0 0;
    font-size: 27px;
    font-weight: normal;
    line-height: 32px;
    color: #0070c0;
}
.sheet .heading td:nth-child(3) {
    padding: 0;
}
.sheet .heading td:nth-child(4) {
    padding: 0 0 0 22px;
    text-align: left;
}
.sheet .heading td:nth-child(6) {
    padding-right: 8px;
    text-align: right;
}
.sheet td.ruled {
    border-color: #000;
}
.sheet .blank td:nth-child(2), .sheet .blank td:nth-child(3) {
    border-right-color: #d0d7e5;
}
.sheet .selected th {
    border-color: #f29536;
    background: #ffd58d;
}
.sheet .selected .ruled {
    border-color: #4a4a58;
    background: #e8ebf4;
}
.sheet td.gain { color: #00b050; }
.sheet td.loss { color: #f00; }
.sheet .selected .cursor {
    background: #fff;
}
/* frame over rows 8-9, columns A-E */
.selection {
    position: absolute;
    left: 26px;
    top: 198px;
    width: 725px;
    height: 53px;
    border: 1px solid #000;
    border-left: 0;
}
.selection::before, .selection::after {
    content: "";
    position: absolute;
    inset: 0;
    border: 1px solid #fff;
    border-left: 0;
}
.selection::after {
    inset: 1px 1px 1px 0;
    border: 1px solid #000;
}
.handle {
    position: absolute;
    left: 746px;
    top: 246px;
    width: 7px;
    height: 7px;
    border: 1px solid #fff;
    background: #000;
}

/* scrollbars */
.vscroll {
    flex: none;
    display: flex;
    flex-direction: column;
    align-items: center;
    width: 16px;
    background: linear-gradient(90deg, #6e92c2, #8cabd5);
}
.vscroll .split {
    width: 13px;
    height: 7px;
    border: 2px solid #fff;
    background: #7f9dc8;
}
.vscroll button {
    height: 18px;
}
.vscroll .thumb {
    flex: 0 0 84%;
    width: 14px;
    display: flex;
    align-items: center;
    justify-content: center;
    border: 1px solid #5f7394;
    border-radius: 2px;
    background: linear-gradient(90deg, #f5f8fb, #dbe2ec 50%, #b9c5d6);
}
.vscroll .last {
    margin-top: auto;
}
.sheet-bar {
    flex: none;
    display: flex;
    height: 16px;
    border-top: 1px solid #6f94c8;
    background: linear-gradient(#8fafdc, #a6c0e5);
}
.jump {
    display: flex;
    justify-content: space-between;
    width: 63px;
    padding: 0 6px;
    border-right: 1px solid #8db2e3;
    background: #c9dcf6;
}
.sheet-tab {
    position: relative;
    z-index: 0;
    width: 53px;
    font-size: 12px;
}
.sheet-tab::before {
    content: "";
    position: absolute;
    z-index: -1;
    inset: 0 -3px 1px 4px;
    border-right: 1px solid #6f8fbf;
    background: linear-gradient(#e7f0fc, #bdd3f2);
    transform: skewX(-40deg);
}
.sheet-tab.current {
    width: 54px;
    font-weight: bold;
}
.sheet-tab.current::before {
    background: #fff;
}
.sheet-tab.new {
    width: 38px;
}
.hscroll {
    display: flex;
    align-items: center;
    width: 540px;
    margin-left: auto;
    margin-right: 16px;
    background: #7b9bc7;
}
.hscroll .split {
    width: 6px;
    height: 14px;
    border: 2px solid #fff;
    background: #6c8fc2;
}
.hscroll button {
    width: 19px;
}
.hscroll .thumb {
    width: 420px;
    height: 14px;
    display: flex;
    align-items: center;
    justify-content: center;
    border: 1px solid #5f7394;
    border-radius: 2px;
    background: linear-gradient(#f5f8fb, #d5dde8 50%, #b9c5d6);
}
.hscroll .last {
    margin-left: auto;
}

/* status bar */
.status {
    flex: none;
    display: flex;
    align-items: stretch;
    height: 23px;
    line-height: 20px;
    border-top: 1px solid #567db1;
    color: #15286b;
    background: linear-gradient(#d7e6f9, #c7dcf8 30%, #b3d0f5 31%, #d7e5f7);
}
.ready {
    width: 53px;
    padding-left: 7px;
    border-right: 1px solid #9ab7dd;
}
.totals {
    display: flex;
    gap: 15px;
    margin-left: auto;
    padding-right: 8px;
}
.zoom {
    display: flex;
    align-items: center;
    gap: 8px;
    padding: 0 5px 2px;
    border-left: 1px solid #8cadd9;
    background: linear-gradient(#a9cbf6, #8ab4ea 50%, #7ba8e3 51%, #9fc3f2);
}
.views {
    display: flex;
    border: 1px solid #8fa6c9;
    background: #cfdef2;
}
.views button {
    width: 18px;
    height: 17px;
}
.views .on {
    background: linear-gradient(#fbe3b3, #ffc25f);
}
#scale {
    width: 100px;
    height: 16px;
    margin: 0 -7px;
    appearance: none;
    background: linear-gradient(transparent 7px, #6987b3 7px, #6987b3 8px, #d5e6fb 8px, #d5e6fb 9px, transparent 9px);
}
#scale::-webkit-slider-thumb {
    appearance: none;
    width: 9px;
    height: 13px;
    border: 1px solid #56708f;
    border-radius: 1px 1px 5px 5px;
    background: linear-gradient(90deg, #fff, #c8d8ee);
}

/* taskbar */
.taskbar {
    flex: none;
    display: flex;
    align-items: center;
    height: 39px;
    padding-left: 8px;
    border-top: 1px solid #17223d;
    box-shadow: inset 0 1px #7b88a8;
    color: #fff;
    background:
        radial-gradient(ellipse 40px 30px at 545px 20px, #5f73a0, transparent),
        radial-gradient(ellipse 40px 14px at 610px 24px, #4f749f, transparent),
        radial-gradient(ellipse 70px 40px at 690px 30px, #7088c4, transparent),
        radial-gradient(ellipse 30px 20px at 440px 34px, #57699c, transparent),
        linear-gradient(90deg, #24375f 0, #2b3f6b 180px, #32477a 240px, #6472ad 380px, #6b72b0 500px, #6870ac 640px, #5f78b0 740px, #5f7bb0 828px, #8a87c4 834px, #8a87c4 940px, #6e6796 965px, #6e6796 1108px, #22345a 1114px);
}
.pin {
    width: 64px;
}
.start {
    margin-right: 9px;
}
.app {
    width: 58px;
    height: 38px;
    margin-left: 4px;
    border: 1px solid #1d2947;
    border-radius: 3px;
    box-shadow: inset 0 0 0 1px rgba(255, 255, 255, .35);
    background: linear-gradient(135deg, rgba(255, 255, 255, .4), rgba(255, 255, 255, .15));
}
.pin + .app {
    margin-left: 0;
}
.app.front {
    background: linear-gradient(135deg, rgba(255, 255, 255, .75), rgba(255, 255, 255, .4));
}
.tray {
    display: flex;
    align-items: center;
    gap: 8px;
    margin-left: auto;
}
.lang {
    margin: 0 9px 4px 0;
}
.clock {
    display: flex;
    flex-direction: column;
    width: 84px;
    padding-left: 4px;
    line-height: 16px;
    text-align: center;
}
.desktop {
    align-self: stretch;
    width: 14px;
    border: 1px solid #8d9ab5;
    background: linear-gradient(#6d7c9b, #24365c 50%);
}
```
